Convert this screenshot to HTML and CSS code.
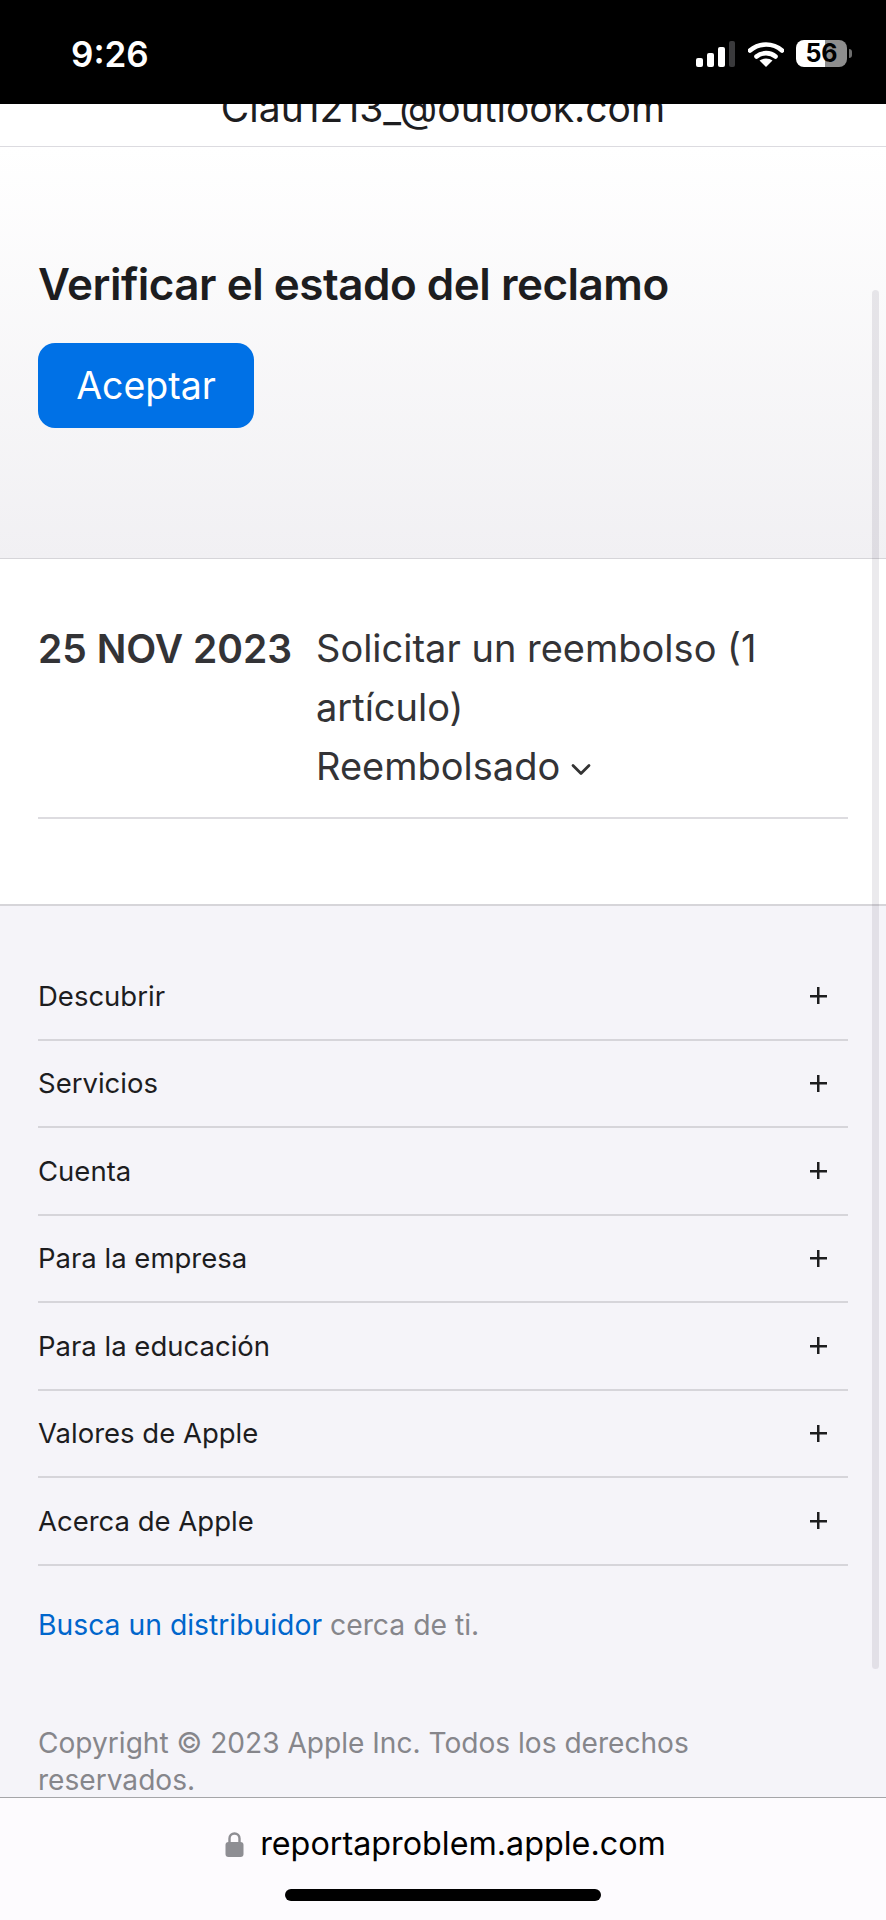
FILE: index.html
```html
<!DOCTYPE html>
<html lang="es">
<head>
    <meta charset="UTF-8">
    <meta name="viewport" content="width=device-width, initial-scale=1.0">
    <title>Report a Problem</title>
    <link rel="stylesheet" href="styles.css">
</head>
<body>
    <div class="phone">
        <div class="status-bar">
            <span class="time">9:26</span>
            <div class="status-icons">
                <svg class="signal" width="39" height="26" viewBox="0 0 39 26">
                    <rect x="0" y="17" width="7" height="9" rx="2" fill="#fff"/>
                    <rect x="11" y="12" width="7" height="14" rx="2" fill="#fff"/>
                    <rect x="22" y="6" width="7" height="20" rx="2" fill="#fff"/>
                    <rect x="33" y="0" width="6" height="26" rx="2" fill="#3a3a3c"/>
                </svg>
                <svg class="wifi" width="36" height="26" viewBox="0 0 36 26">
                    <path d="M2 9.5C11 1.5 25 1.5 34 9.5" fill="none" stroke="#fff" stroke-width="4.6" stroke-linecap="round"/>
                    <path d="M8.5 15.5C13.5 11 22.5 11 27.5 15.5" fill="none" stroke="#fff" stroke-width="4.6" stroke-linecap="round"/>
                    <path d="M18 26L11.5 19.6C15 16.8 21 16.8 24.5 19.6Z" fill="#fff"/>
                </svg>
                <div class="battery">
                    <div class="battery-body"><span>56</span></div>
                    <div class="battery-nub"></div>
                </div>
            </div>
        </div>

        <div class="content">
            <div class="scroll-thumb"></div>

            <div class="account">
                <span>Clau1213_@outlook.com</span>
            </div>

            <div class="status-check">
                <h2>Verificar el estado del reclamo</h2>
                <button class="btn-accept">Aceptar</button>
            </div>

            <div class="requests">
                <div class="request">
                    <div class="request-date">25 NOV 2023</div>
                    <div class="request-info">
                        <div>Solicitar un reembolso (1 artículo)</div>
                        <div class="request-state">
                            Reembolsado
                            <svg class="chevron" width="20" height="13" viewBox="0 0 20 13">
                                <path d="M2 2.5L10 10.5L18 2.5" fill="none" stroke="#333" stroke-width="2.8" stroke-linecap="round" stroke-linejoin="round"/>
                            </svg>
                        </div>
                    </div>
                </div>
            </div>

            <div class="footer">
                <div class="footer-row"><span>Descubrir</span><span class="plus"></span></div>
                <div class="footer-row"><span>Servicios</span><span class="plus"></span></div>
                <div class="footer-row"><span>Cuenta</span><span class="plus"></span></div>
                <div class="footer-row"><span>Para la empresa</span><span class="plus"></span></div>
                <div class="footer-row"><span>Para la educación</span><span class="plus"></span></div>
                <div class="footer-row"><span>Valores de Apple</span><span class="plus"></span></div>
                <div class="footer-row"><span>Acerca de Apple</span><span class="plus"></span></div>
                <p class="reseller"><a href="#">Busca un distribuidor</a> cerca de ti.</p>
                <p class="copyright">Copyright © 2023 Apple Inc. Todos los derechos reservados.</p>
            </div>
        </div>

        <div class="url-bar">
            <div class="url">
                <svg class="lock" width="19" height="25" viewBox="0 0 19 25">
                    <path d="M4.5 11V6.5a5 5 0 0 1 10 0V11" fill="none" stroke="#8e8e93" stroke-width="2.4"/>
                    <rect x="0.5" y="10" width="18" height="15" rx="3" fill="#8e8e93"/>
                </svg>
                <span>reportaproblem.apple.com</span>
            </div>
            <div class="home-bar"></div>
        </div>
    </div>
</body>
</html>
```

FILE: styles.css
```css
* {
    box-sizing: border-box;
}

body {
    margin: 0;
    background: #fff;
    font-family: Inter, "Liberation Sans", sans-serif;
}

.phone {
    width: 886px;
    height: 1920px;
    display: flex;
    flex-direction: column;
    overflow: hidden;
}

/* status bar */
.status-bar {
    height: 104px;
    flex-shrink: 0;
    background: #000;
    display: flex;
    justify-content: space-between;
    align-items: flex-start;
    padding: 35px 34px 0 71px;
    color: #fff;
}

.time {
    font-size: 35px;
    font-weight: 600;
    line-height: 38px;
}

.status-icons {
    display: flex;
    align-items: flex-start;
    padding-top: 6px;
}

.signal {
    margin-right: 13px;
}

.wifi {
    margin-right: 12px;
}

.battery {
    display: flex;
    align-items: center;
    margin-top: -1px;
}

.battery-body {
    width: 51px;
    height: 27px;
    border-radius: 8px;
    background: linear-gradient(90deg, #fff 57%, #8e8e8e 57%);
    color: #000;
    font-size: 25px;
    font-weight: 700;
    line-height: 27px;
    text-align: center;
}

.battery-nub {
    width: 3px;
    height: 9px;
    margin-left: 2px;
    border-radius: 0 3px 3px 0;
    background: #6e6e6e;
}

/* page */
.content {
    flex: 1;
    position: relative;
    overflow: hidden;
    min-height: 0;
}

.scroll-thumb {
    position: absolute;
    top: 186px;
    left: 872px;
    width: 7px;
    height: 1379px;
    border-radius: 4px;
    background: rgba(60, 50, 80, 0.1);
}

.account {
    height: 43px;
    display: flex;
    justify-content: center;
    align-items: flex-end;
    overflow: hidden;
    border-bottom: 1px solid #dcdbe0;
    color: #1d1d1f;
    font-size: 39px;
    line-height: 50px;
    padding-bottom: 13px;
}

.status-check {
    height: 412px;
    padding: 109px 38px 0;
    background: linear-gradient(180deg, #fff, #f1f0f3);
    border-bottom: 1px solid #d6d5d9;
}

.status-check h2 {
    margin: 0 0 31px;
    color: #1d1d1f;
    font-size: 44px;
    font-weight: 600;
    line-height: 56px;
    letter-spacing: -0.5px;
}

.btn-accept {
    display: block;
    width: 216px;
    height: 85px;
    border: none;
    border-radius: 17px;
    background: #0071e6;
    color: #fff;
    font-family: inherit;
    font-size: 37.5px;
}

.requests {
    height: 347px;
    padding: 60px 38px 0;
    background: #fff;
    border-bottom: 2px solid #d6d5d9;
}

.request {
    display: flex;
    height: 200px;
    border-bottom: 2px solid #dddce0;
    color: #333336;
    font-size: 38px;
    line-height: 59px;
}

.request-date {
    width: 278px;
    flex-shrink: 0;
    font-size: 39px;
    font-weight: 600;
}

.request-state {
    display: flex;
    align-items: center;
}

.chevron {
    margin: 6px 0 0 11px;
}

/* footer */
.footer {
    padding: 47px 38px 0;
    background: #f5f4f9;
    height: 900px;
}

.footer-row {
    height: 87.5px;
    display: flex;
    justify-content: space-between;
    align-items: center;
    border-bottom: 2px solid #d6d5da;
    color: #1d1d1f;
    font-size: 27.5px;
}

.plus {
    width: 17px;
    height: 17px;
    margin-right: 21px;
    background:
        linear-gradient(#1d1d1f, #1d1d1f) center / 100% 2.5px no-repeat,
        linear-gradient(#1d1d1f, #1d1d1f) center / 2.5px 100% no-repeat;
}

.reseller {
    margin: 0;
    padding-top: 41px;
    color: #86868b;
    font-size: 28.3px;
    line-height: 37px;
}

.reseller a {
    color: #0066cc;
    text-decoration: none;
}

.copyright {
    max-width: 700px;
    margin: 0;
    padding-top: 81px;
    color: #86868b;
    font-size: 28.1px;
    line-height: 37px;
}

/* safari bar */
.url-bar {
    height: 123px;
    flex-shrink: 0;
    border-top: 1px solid #a5a5a8;
    background: #fdfbfe;
    display: flex;
    flex-direction: column;
    align-items: center;
}

.url {
    display: flex;
    align-items: center;
    gap: 16px;
    margin-top: 25px;
    margin-left: 5px;
    color: #000;
    font-size: 32.3px;
    line-height: 42px;
}

.home-bar {
    width: 316px;
    height: 12px;
    margin-top: 24px;
    border-radius: 6px;
    background: #000;
}
```
